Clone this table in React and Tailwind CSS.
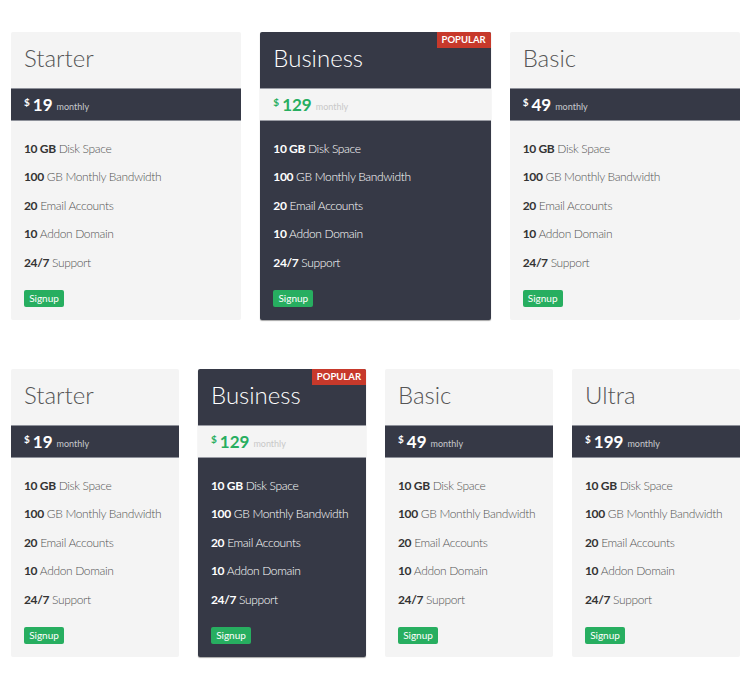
import React from "react";

const features = [
  ["10 GB", "Disk Space"],
  ["100", "GB Monthly Bandwidth"],
  ["20", "Email Accounts"],
  ["10", "Addon Domain"],
  ["24/7", "Support"],
];

function Card({ name, price, popular }) {
  const dark = popular;
  return (
    <div
      className={
        "relative rounded-[2px] overflow-hidden " +
        (dark
          ? "bg-[#363946] text-white shadow-[0_1px_1px_rgba(0,0,0,0.35)]"
          : "bg-[#f4f4f4] text-[#555]")
      }
    >
      {popular && (
        <div className="absolute top-0 right-0 bg-[#c7392b] text-white text-[9.5px] font-bold leading-[16px] h-[16px] px-[5px]">
          POPULAR
        </div>
      )}
      <div className="h-[56px] pl-[13px] flex items-center pb-[4px]">
        <span
          className={
            "text-[24px] font-light leading-none " +
            (dark ? "text-white" : "text-[#555]")
          }
        >
          {name}
        </span>
      </div>
      <div
        className={
          "h-[33px] border-y pl-[13px] flex items-center " +
          (dark
            ? "bg-[#f4f4f4] border-[#9a9ca4]"
            : "bg-[#363946] border-[#8d9099]")
        }
      >
        <span
          className={
            "text-[10px] font-bold self-start mt-[6px] mr-[3px] " +
            (dark ? "text-[#27ae60]" : "text-white")
          }
        >
          $
        </span>
        <span
          className={
            "text-[17px] font-bold leading-none " +
            (dark ? "text-[#27ae60]" : "text-white")
          }
        >
          {price}
        </span>
        <span
          className={
            "text-[9px] ml-[4px] mt-[4px] " +
            (dark ? "text-[#c8c8c8]" : "text-[#c8c9cd]")
          }
        >
          monthly
        </span>
      </div>
      <div className="pl-[13px] pt-[14px] pb-[13px]">
        <ul>
          {features.map(([b, t]) => (
            <li
              key={t}
              className="text-[12px] leading-[28.4px] font-light whitespace-nowrap tracking-[-0.35px]"
            >
              <span
                className={
                  "font-bold " + (dark ? "text-white" : "text-[#333]")
                }
              >
                {b}
              </span>{" "}
              <span className={dark ? "text-white" : "text-[#555]"}>{t}</span>
            </li>
          ))}
        </ul>
        <button className="mt-[13px] h-[17px] w-[40px] rounded-[2px] bg-[#27ae60] text-white text-[10px] leading-[17px] flex items-center justify-center">
          Signup
        </button>
      </div>
    </div>
  );
}

export default function App() {
  return (
    <div
      className="bg-white w-[750px] min-h-[679px] pl-[11px] pr-[10px] pt-[32px] pb-[22px]"
      style={{ fontFamily: "Lato, 'Open Sans', sans-serif" }}
    >
      <div className="grid grid-cols-3 gap-[19px]">
        <Card name="Starter" price="19" />
        <Card name="Business" price="129" popular />
        <Card name="Basic" price="49" />
      </div>
      <div className="grid grid-cols-4 gap-[19px] mt-[49px]">
        <Card name="Starter" price="19" />
        <Card name="Business" price="129" popular />
        <Card name="Basic" price="49" />
        <Card name="Ultra" price="199" />
      </div>
    </div>
  );
}
